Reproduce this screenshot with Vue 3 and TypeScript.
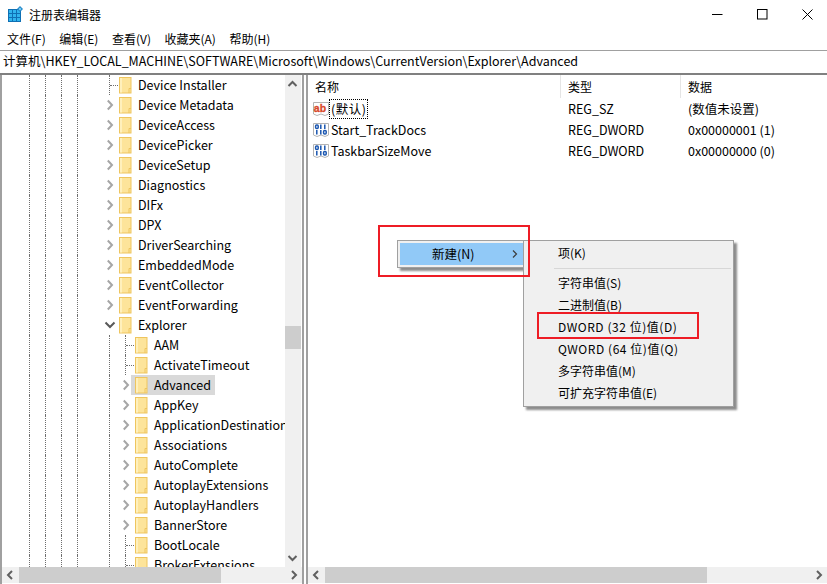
<script setup lang="ts">
interface Row { name: string; depth: number; kind: 'leaf' | 'closed' | 'open'; selected?: boolean }
const rows: Row[] = [
  { name: 'Device Installer', depth: 0, kind: 'leaf' },
  { name: 'Device Metadata', depth: 0, kind: 'closed' },
  { name: 'DeviceAccess', depth: 0, kind: 'closed' },
  { name: 'DevicePicker', depth: 0, kind: 'closed' },
  { name: 'DeviceSetup', depth: 0, kind: 'closed' },
  { name: 'Diagnostics', depth: 0, kind: 'closed' },
  { name: 'DIFx', depth: 0, kind: 'closed' },
  { name: 'DPX', depth: 0, kind: 'closed' },
  { name: 'DriverSearching', depth: 0, kind: 'closed' },
  { name: 'EmbeddedMode', depth: 0, kind: 'closed' },
  { name: 'EventCollector', depth: 0, kind: 'closed' },
  { name: 'EventForwarding', depth: 0, kind: 'closed' },
  { name: 'Explorer', depth: 0, kind: 'open' },
  { name: 'AAM', depth: 1, kind: 'leaf' },
  { name: 'ActivateTimeout', depth: 1, kind: 'leaf' },
  { name: 'Advanced', depth: 1, kind: 'closed', selected: true },
  { name: 'AppKey', depth: 1, kind: 'closed' },
  { name: 'ApplicationDestinations', depth: 1, kind: 'closed' },
  { name: 'Associations', depth: 1, kind: 'closed' },
  { name: 'AutoComplete', depth: 1, kind: 'closed' },
  { name: 'AutoplayExtensions', depth: 1, kind: 'closed' },
  { name: 'AutoplayHandlers', depth: 1, kind: 'closed' },
  { name: 'BannerStore', depth: 1, kind: 'closed' },
  { name: 'BootLocale', depth: 1, kind: 'leaf' },
  { name: 'BrokerExtensions', depth: 1, kind: 'leaf' },
]
const values = [
  { name: '(默认)', type: 'REG_SZ', data: '(数值未设置)', str: true },
  { name: 'Start_TrackDocs', type: 'REG_DWORD', data: '0x00000001 (1)', str: false },
  { name: 'TaskbarSizeMove', type: 'REG_DWORD', data: '0x00000000 (0)', str: false },
]
const menus = ['文件(F)', '编辑(E)', '查看(V)', '收藏夹(A)', '帮助(H)']
const subItems = [
  { label: '字符串值(S)', wide: false },
  { label: '二进制值(B)', wide: false },
  { label: 'DWORD (32 位)值(D)', wide: true },
  { label: 'QWORD (64 位)值(Q)', wide: true },
  { label: '多字符串值(M)', wide: false },
  { label: '可扩充字符串值(E)', wide: false },
]
</script>

<template>
  <div class="win">
    <header class="title">
      <svg class="appicon" width="16" height="16" viewBox="0 0 16 16">
        <rect x="0" y="3" width="13" height="13" fill="#0f70b4" />
        <g fill="#30b4ee">
          <rect x="1" y="4" width="3" height="3" /><rect x="5" y="4" width="3" height="3" /><rect x="9" y="4" width="3" height="3" />
          <rect x="1" y="8" width="3" height="3" /><rect x="5" y="8" width="3" height="3" /><rect x="9" y="8" width="3" height="3" />
          <rect x="1" y="12" width="3" height="3" /><rect x="5" y="12" width="3" height="3" /><rect x="9" y="12" width="3" height="3" />
        </g>
        <path d="M12 0 L15 3 L12 6 L9 3 Z" fill="#1f86c8" />
        <path d="M12 1.5 L13.5 3 L12 4.5 L10.5 3 Z" fill="#7fd0f5" />
      </svg>
      <span class="titletext">注册表编辑器</span>
      <div class="caption">
        <svg width="11" height="11" viewBox="0 0 11 11"><path d="M0 5.5H10.5" stroke="#000" fill="none" /></svg>
        <svg width="11" height="11" viewBox="0 0 11 11"><rect x=".5" y=".5" width="9.5" height="9.5" stroke="#000" fill="none" /></svg>
        <svg width="11" height="11" viewBox="0 0 11 11"><path d="M.5 .5L10.5 10.5M10.5 .5L.5 10.5" stroke="#000" fill="none" /></svg>
      </div>
    </header>
    <nav class="menubar"><span v-for="m in menus" :key="m">{{ m }}</span></nav>
    <div class="address">计算机\HKEY_LOCAL_MACHINE\SOFTWARE\Microsoft\Windows\CurrentVersion\Explorer\Advanced</div>

    <main class="body">
      <section class="treepane">
        <div class="treetop">
          <div class="tree">
            <div v-for="r in rows" :key="r.name" class="row">
              <i class="guide" /><i class="guide" /><i class="guide" /><i class="guide" /><i class="guide blank" />
              <i v-if="r.depth === 1" class="guide" />
              <span class="expander">
                <i v-if="r.kind === 'leaf'" class="stub" />
                <svg v-else-if="r.kind === 'closed'" class="chev" width="9" height="20" viewBox="0 0 9 20"><path d="M1.8 5.5L6 10L1.8 14.5" fill="none" stroke="#a6a6a6" stroke-width="2" /></svg>
                <svg v-else class="chev" width="9" height="20" viewBox="0 0 9 20"><path d="M-.5 7.5L4 12L8.5 7.5" fill="none" stroke="#595959" stroke-width="2" /></svg>
              </span>
              <span class="node" :class="{ sel: r.selected }">
                <svg class="folder" width="13" height="17" viewBox="0 0 13 17">
                  <rect x=".5" y=".5" width="11.5" height="15.5" fill="#fde49a" stroke="#eec55e" />
                  <rect x="1" y="1" width="2" height="14.5" fill="#fff0bc" />
                  <path d="M10 16V11.5H12" fill="none" stroke="#eec55e" />
                </svg>
                <span class="nodetext">{{ r.name }}</span>
              </span>
            </div>
          </div>
          <div class="vscroll">
            <svg width="15" height="17" viewBox="0 0 15 17"><path d="M3.5 11L7.5 7L11.5 11" fill="none" stroke="#606060" stroke-width="2" /></svg>
            <div class="vtrack"><div class="vthumb" /></div>
            <svg width="15" height="17" viewBox="0 0 15 17"><path d="M3.5 6L7.5 10L11.5 6" fill="none" stroke="#606060" stroke-width="2" /></svg>
          </div>
        </div>
        <div class="hscroll">
          <svg class="arrow" width="17" height="16" viewBox="0 0 17 16"><path d="M10 4L6 8L10 12" fill="none" stroke="#606060" stroke-width="2" /></svg>
          <div class="htrack"><div class="hthumb left" /></div>
          <svg class="arrow" width="17" height="16" viewBox="0 0 17 16"><path d="M7 4L11 8L7 12" fill="none" stroke="#606060" stroke-width="2" /></svg>
        </div>
      </section>

      <section class="listpane">
        <div class="listhead">
          <span class="col1 hcell">名称</span><span class="col2 hcell">类型</span><span class="col3 hcell">数据</span>
        </div>
        <div class="list">
          <div v-for="(v, i) in values" :key="v.name" class="vrow">
            <span class="col1 vname">
              <svg class="vicon" width="16" height="16" viewBox="0 0 16 16">
                <path d="M.5 1.5H15.5V13L12 14.5L8 13L4 14.5L.5 13Z" fill="#fff" stroke="#b4b4b4" />
                <template v-if="v.str">
                  <text x=".8" y="10.5" font-size="10.5" font-weight="700" fill="#d8482a" stroke="#d8482a" stroke-width=".3" font-family="Liberation Sans, sans-serif">ab</text>
                </template>
                <template v-else>
                  <g fill="none" stroke="#1a56b0" stroke-width="1.5">
                    <rect x="2.6" y="3" width="2.6" height="3.6" rx="1" />
                    <path d="M7.8 2.5V7M11.8 2.5V7" />
                    <path d="M3.8 8V12.5M7.8 8V12.5" />
                    <rect x="10.6" y="8.5" width="2.6" height="3.6" rx="1" />
                  </g>
                </template>
              </svg>
              <span class="vlabel" :class="{ focus: i === 0 }">{{ v.name }}</span>
            </span>
            <span class="col2">{{ v.type }}</span>
            <span class="col3">{{ v.data }}</span>
          </div>
        </div>
        <div class="hscroll right">
          <svg class="arrow" width="17" height="16" viewBox="0 0 17 16"><path d="M10 4L6 8L10 12" fill="none" stroke="#606060" stroke-width="2" /></svg>
          <div class="htrack"><div class="hthumb rightthumb" /></div>
          <svg class="arrow" width="17" height="16" viewBox="0 0 17 16"><path d="M7 4L11 8L7 12" fill="none" stroke="#606060" stroke-width="2" /></svg>
        </div>
      </section>

      <div class="ctx first">
        <div class="hot">
          <span class="hotlabel">新建(N)</span>
          <svg width="7" height="10" viewBox="0 0 7 10"><path d="M1 1.5L4.5 5L1 8.5" fill="none" stroke="#3c3c3c" stroke-width="1.2" /></svg>
        </div>
      </div>
      <div class="ctx sub">
        <div class="subitem">项(K)</div>
        <div class="sep" />
        <div v-for="s in subItems" :key="s.label" class="subitem" :class="{ wide: s.wide }">{{ s.label }}</div>
      </div>
      <div class="redbox one" />
      <div class="redbox two" />
    </main>
  </div>
</template>

<style>
html, body { margin: 0; background: #fff; }
</style>

<style scoped>
.win { width: 827px; height: 584px; display: flex; flex-direction: column; overflow: hidden; background: #fff; color: #000; font-family: "Noto Sans CJK SC", sans-serif; font-size: 12.5px; }
.title { height: 28px; display: flex; align-items: center; padding-left: 8px; box-sizing: border-box; flex: none; position: relative; }
.appicon { margin-right: 5px; flex: none; }
.titletext { font-size: 12px; }
.caption { margin-left: auto; width: 147px; display: flex; justify-content: space-between; padding: 0 14px 0 32px; box-sizing: border-box; }
.menubar { height: 22px; display: flex; align-items: center; gap: 13.5px; padding: 0 0 2px 7px; box-sizing: border-box; flex: none; font-size: 12px; }
.address { height: 23px; box-sizing: border-box; border-top: 1px solid #a0a0a0; flex: none; padding-left: 3px; line-height: 19px; white-space: nowrap; overflow: hidden; }
.body { flex: 1; min-height: 0; display: flex; position: relative; border-top: 2px solid #808080; }
.treepane { width: 304px; flex: none; box-sizing: border-box; border-left: 2px solid #a0a0a0; border-right: 2px solid #a0a0a0; display: flex; flex-direction: column; }
.treetop { flex: 1; min-height: 0; display: flex; }
.tree { flex: 1; min-width: 0; overflow: hidden; }
.row { height: 20px; display: flex; padding-left: 27px; white-space: nowrap; }
.guide { width: 16px; flex: none; box-sizing: border-box; border-left: 1px dotted #6e6e6e; }
.guide.blank { border-left: none; }
.expander { width: 16px; flex: none; position: relative; box-sizing: border-box; border-left: 1px dotted #6e6e6e; }
.stub { position: absolute; left: 0; top: 10px; width: 8px; border-top: 1px dotted #6e6e6e; }
.chev { position: absolute; left: -4px; top: 0; background: #fff; overflow: visible; }
.node { display: flex; align-items: center; height: 20px; margin-left: -10px; padding-left: 4px; padding-right: 4px; }
.node.sel { background: #d9d9d9; }
.folder { flex: none; margin-right: 6px; }
.nodetext { line-height: 20px; }
.vscroll { width: 16px; flex: none; background: #f0f0f0; display: flex; flex-direction: column; margin-right: 1px; }
.vtrack { flex: 1; position: relative; }
.vthumb { margin-top: 234px; height: 23px; background: #cdcdcd; }
.hscroll { height: 16px; flex: none; background: #f0f0f0; display: flex; margin-bottom: 1px; }
.htrack { flex: 1; min-width: 0; }
.hthumb { height: 16px; background: #cdcdcd; }
.hthumb.left { width: 202px; }
.arrow { flex: none; }
.listpane { flex: 1; min-width: 0; display: flex; flex-direction: column; border-left: 2px solid #a0a0a0; margin-left: 2px; }
.listhead { height: 23px; display: flex; flex: none; }
.hcell { border-right: 1px solid #e5e5e5; line-height: 24px; box-sizing: border-box; padding-left: 7px; font-size: 12px; }
.col1 { width: 253px; flex: none; box-sizing: border-box; padding-left: 7px; }
.col2 { width: 120px; flex: none; box-sizing: border-box; padding-left: 7px; }
.col3 { flex: 1; box-sizing: border-box; padding-left: 7px; }
.hcell.col3 { border-right: none; }
.list { flex: 1; }
.vrow { height: 21px; display: flex; align-items: center; white-space: nowrap; }
.vname { display: flex; align-items: center; padding-left: 5px; }
.vicon { flex: none; margin-right: 2px; }
.vlabel { box-sizing: border-box; line-height: 18px; }
.vlabel.focus { outline: 1px dotted #000; outline-offset: -1px; line-height: 19px; padding: 0 2px 1px; margin-left: -2px; letter-spacing: .5px; }
.hscroll.right { margin-left: 0; }
.rightthumb { width: 382px; }
.ctx { position: absolute; box-sizing: border-box; background: #f0f0f0; border: 1px solid #a0a0a0; box-shadow: 3px 3px 2px rgba(0,0,0,.45); }
.first { left: 397px; top: 165px; width: 127px; height: 28px; padding: 2px 0 2px 2px; }
.hot { height: 22px; background: #91c9f7; display: flex; align-items: center; padding-left: 32px; padding-right: 4px; justify-content: space-between; }
.hotlabel { position: relative; top: -1px; }
.sub { left: 523px; top: 165px; width: 211px; height: 167px; padding: 2px 0; font-size: 12px; }
.subitem { height: 22px; line-height: 19px; padding-left: 34px; white-space: nowrap; }
.subitem.wide { letter-spacing: .55px; }
.sep { height: 1px; background: #d7d7d7; margin: 3px 2px 4px 30px; }
.redbox { position: absolute; box-sizing: border-box; border: 2px solid #ee1c25; }
.one { left: 378px; top: 150px; width: 152px; height: 52px; }
.two { left: 537px; top: 237px; width: 162px; height: 27px; }
</style>
